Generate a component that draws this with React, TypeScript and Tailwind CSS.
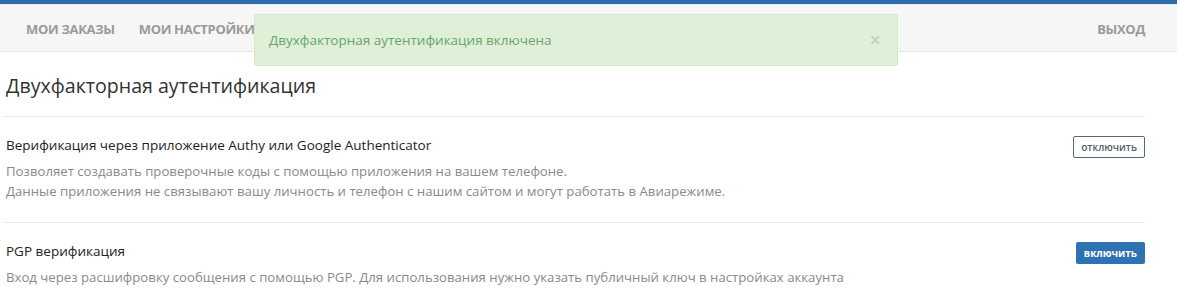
import React from 'react';

const font = { fontFamily: '"Open Sans", "Liberation Sans", sans-serif' };

function NavLink({ children }: { children: React.ReactNode }) {
  return (
    <a className="px-[12px] text-[13px] font-bold uppercase tracking-tight text-[#9a9a9a]" href="#">
      {children}
    </a>
  );
}

function Setting({
  title,
  lines,
  action,
}: {
  title: string;
  lines: string[];
  action: React.ReactNode;
}) {
  return (
    <div className="flex items-start justify-between">
      <div>
        <div className="text-[13.5px] leading-[20px] text-[#222]">{title}</div>
        <div className="mt-[6px] text-[13.2px] leading-[20px] text-[#8a8a8a]">
          {lines.map((l) => (
            <div key={l}>{l}</div>
          ))}
        </div>
      </div>
      <div className="flex pt-[1px]">{action}</div>
    </div>
  );
}

export default function App() {
  return (
    <div className="relative min-h-[297px] bg-white" style={font}>
      <div className="h-[4px] bg-[#2f6aa9]" />
      <div className="h-[1px] bg-[#dbe8f5]" />

      {/* top nav */}
      <nav className="flex h-[47px] items-center justify-between border-b border-[#e7e7e7] bg-[#f6f6f6] pl-[14px] pr-[20px] pt-[3px]">
        <div className="flex items-center">
          <NavLink>Мои заказы</NavLink>
          <NavLink>Мои настройки</NavLink>
        </div>
        <NavLink>Выход</NavLink>
      </nav>

      {/* flash message */}
      <div className="absolute left-[254px] top-[14px] flex h-[52px] w-[644px] items-center justify-between rounded-[3px] border border-[#d3e8c8] bg-[#dff0d8] pl-[14px] pr-[16px]">
        <span className="text-[13.5px] text-[#6aa46a]">Двухфакторная аутентификация включена</span>
        <span className="text-[20px] font-bold leading-none text-[#c2d5bc]">×</span>
      </div>

      <main className="pl-[6px] pr-[32px]">
        <h1 className="pb-[16px] pt-[20px] text-[19.6px] leading-[28px] text-[#333]">
          Двухфакторная аутентификация
        </h1>

        <div className="-ml-[3px] border-t border-[#e9e9e9] pb-[21px] pt-[18px]">
          <div className="ml-[3px]">
            <Setting
              title="Верификация через приложение Authy или Google Authenticator"
              lines={[
                'Позволяет создавать проверочные коды с помощью приложения на вашем телефоне.',
                'Данные приложения не связывают вашу личность и телефон с нашим сайтом и могут работать в Авиарежиме.',
              ]}
              action={
                <button className="h-[22px] rounded-[2px] border border-[#56697a] bg-white px-[7px] text-[10px] font-semibold text-[#4d5f70]">
                  отключить
                </button>
              }
            />
          </div>
        </div>

        <div className="-ml-[3px] border-t border-[#e9e9e9] pt-[18px]">
          <div className="ml-[3px]">
            <Setting
              title="PGP верификация"
              lines={[
                'Вход через расшифровку сообщения с помощью PGP. Для использования нужно указать публичный ключ в настройках аккаунта',
              ]}
              action={
                <button className="h-[22px] rounded-[2px] bg-[#2f72b3] px-[8px] text-[10px] font-bold text-white">
                  включить
                </button>
              }
            />
          </div>
        </div>
      </main>
    </div>
  );
}
